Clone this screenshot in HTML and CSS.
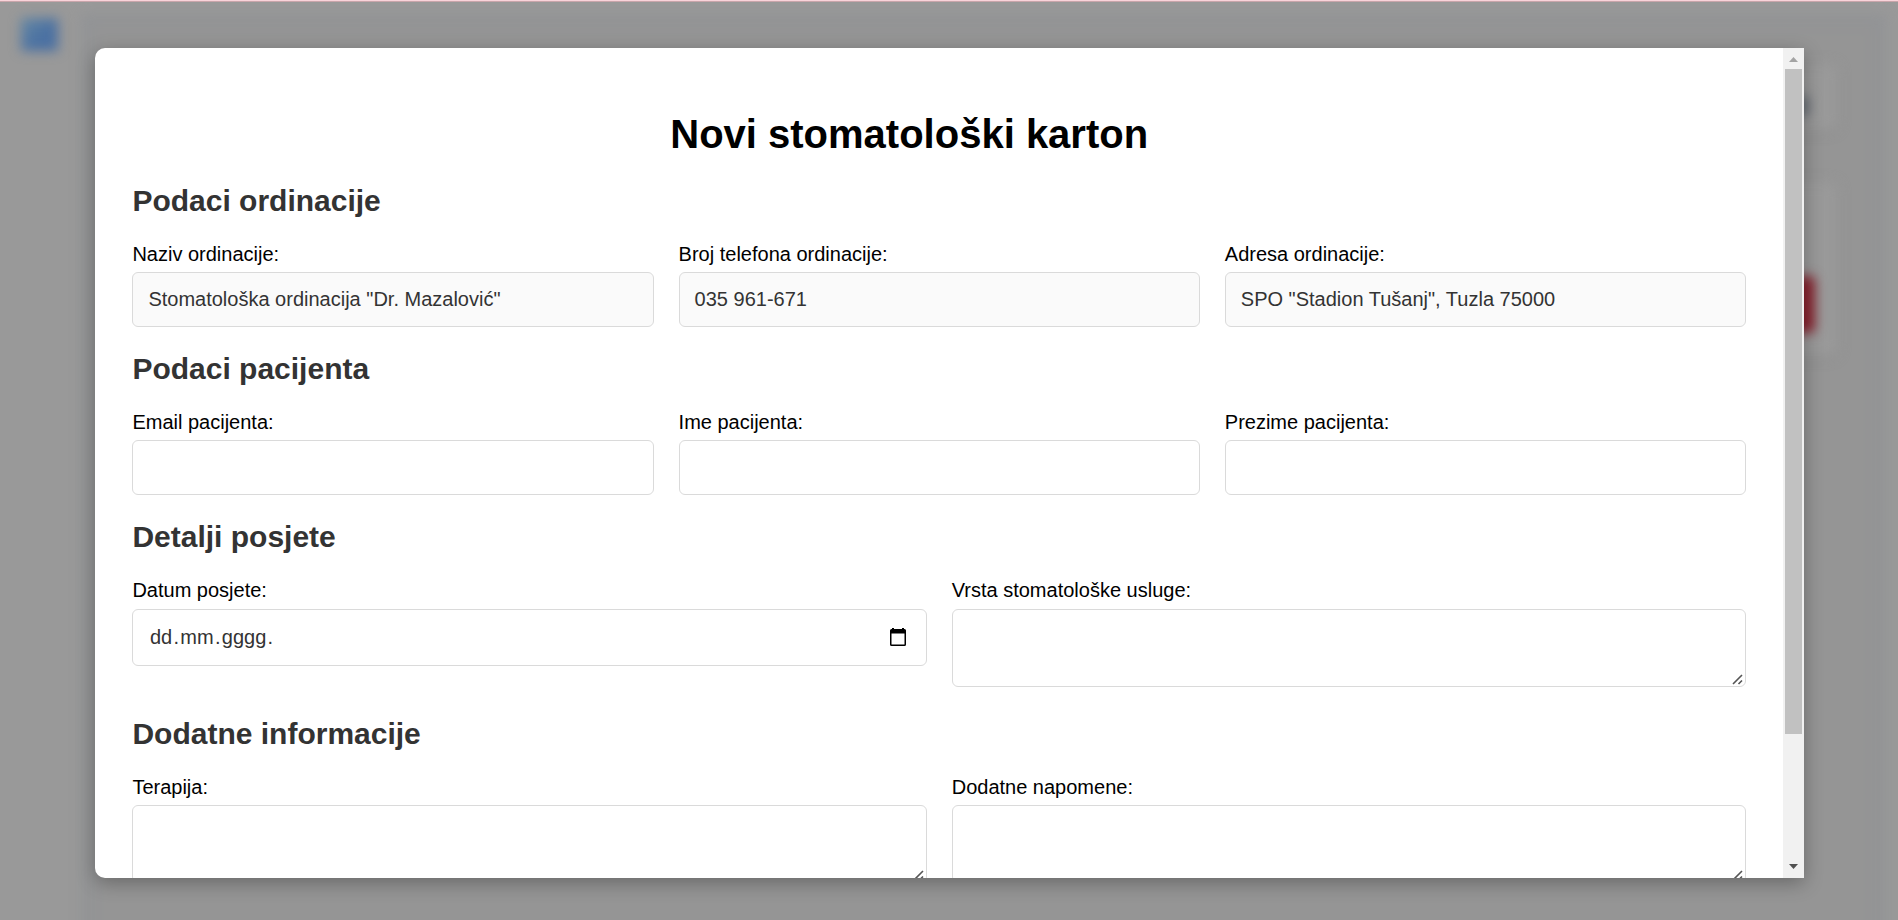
FILE: index.html
```html
<!DOCTYPE html>
<html lang="bs">
<head>
<meta charset="utf-8">
<title>Novi stomatološki karton</title>
<link rel="stylesheet" href="styles.css">
</head>
<body>
<div class="page">
  <div class="backdrop">
    <span class="menu-button"></span>
    <span class="frame"></span>
    <span class="card card-top"></span>
    <span class="card card-main"></span>
    <span class="glyph"></span>
    <span class="danger-button"></span>
  </div>
  <div class="topline"></div>
  <main class="modal">
    <form class="form">
      <h1 class="title">Novi stomatološki karton</h1>
      <h2 class="section-title">Podaci ordinacije</h2>
      <div class="row three">
        <div class="field"><label class="label">Naziv ordinacije:</label><div class="input readonly">Stomatološka ordinacija "Dr. Mazalović"</div></div>
        <div class="field"><label class="label">Broj telefona ordinacije:</label><div class="input readonly">035 961-671</div></div>
        <div class="field"><label class="label">Adresa ordinacije:</label><div class="input readonly">SPO "Stadion Tušanj", Tuzla 75000</div></div>
      </div>
      <h2 class="section-title">Podaci pacijenta</h2>
      <div class="row three">
        <div class="field"><label class="label">Email pacijenta:</label><div class="input"></div></div>
        <div class="field"><label class="label">Ime pacijenta:</label><div class="input"></div></div>
        <div class="field"><label class="label">Prezime pacijenta:</label><div class="input"></div></div>
      </div>
      <h2 class="section-title">Detalji posjete</h2>
      <div class="row two visit">
        <div class="field"><label class="label">Datum posjete:</label>
          <div class="input date"><span class="date-text">dd<i class="dot">.</i>mm<i class="dot">.</i>gggg<i class="dot">.</i></span>
            <svg class="calendar" viewBox="0 0 16 18"><path d="M0 2.5Q0 1 1.5 1H2V0H4V1H12V0H14V1H14.5Q16 1 16 2.5V16.5Q16 18 14.5 18H1.500Q0 18 0 16.500ZM1.500 5.500V16.500H14.500V5.500Z" fill-rule="evenodd"/></svg>
          </div>
        </div>
        <div class="field"><label class="label">Vrsta stomatološke usluge:</label><div class="input area"><svg class="grip" viewBox="0 0 11 11"><path d="M1 10L10 1M6.500 10L10 6.500"/></svg></div></div>
      </div>
      <h2 class="section-title">Dodatne informacije</h2>
      <div class="row two">
        <div class="field"><label class="label">Terapija:</label><div class="input area"><svg class="grip" viewBox="0 0 11 11"><path d="M1 10L10 1M6.500 10L10 6.500"/></svg></div></div>
        <div class="field"><label class="label">Dodatne napomene:</label><div class="input area"><svg class="grip" viewBox="0 0 11 11"><path d="M1 10L10 1M6.500 10L10 6.500"/></svg></div></div>
      </div>
    </form>
    <div class="scrollbar">
      <svg class="arrow" viewBox="0 0 21 21"><path d="M6 14L10.500 9L15 14Z" fill="#a3a3a3"/></svg>
      <div class="thumb"></div>
      <svg class="arrow bottom" viewBox="0 0 21 21"><path d="M6 7L10.500 12L15 7Z" fill="#505050"/></svg>
    </div>
  </main>
</div>
</body>
</html>
```
FILE: styles.css
```css
* { box-sizing: border-box; }
body { margin: 0; font-family: "Liberation Sans", Arial, sans-serif; color: #000; }
.page { position: relative; width: 1898px; height: 920px; overflow: hidden; padding: 48px 94px 0 95px; background: #999; }

/* Blurred application behind the dialog */
.backdrop { position: absolute; inset: 0; overflow: hidden; }
.backdrop span { position: absolute; }
.menu-button { left: 21px; top: 18px; width: 37px; height: 33px; background: linear-gradient(135deg, #6488a4, #4a70a2 60%); filter: blur(6px); }
.frame { left: 82px; top: 14px; right: 13px; bottom: -30px; background: #959595; box-shadow: inset 0 0 14px 8px #919396; filter: blur(6px); }
.card { border-radius: 8px; background: #999; box-shadow: 0 4px 12px rgba(0, 0, 0, .05); filter: blur(6px); }
.card-top { left: 200px; top: 64px; width: 1638px; height: 66px; }
.card-main { left: 200px; top: 182px; width: 1638px; height: 174px; }
.glyph { left: 1780px; top: 96px; width: 29px; height: 20px; background: #666c74; filter: blur(6px); }
.danger-button { left: 1760px; top: 276px; width: 55px; height: 57px; background: #87202c; border-radius: 5px; filter: blur(6px); }
.topline { position: absolute; left: 0; right: 0; top: 0; height: 2px; background: #f9d3da; border-bottom: 1px solid #c8a5aa; }

.modal { position: relative; display: flex; height: 830px; overflow: hidden; background: #fff; border-radius: 10px 0 0 10px; box-shadow: 0 5px 19px rgba(0, 0, 0, .3); }
.form { flex: 1; min-width: 0; padding: 62px 37px 0 37.4px; }
.title { margin: 0; padding-right: 60px; height: 49px; line-height: 49px; font-size: 40px; text-align: center; }
.section-title { margin: 0; padding-top: 25px; height: 75px; line-height: 34px; font-size: 30px; color: #333; }
.row { display: grid; gap: 25px; height: 93px; }
.three { grid-template-columns: repeat(3, 1fr); }
.two { grid-template-columns: repeat(2, 1fr); }
.visit { height: 122px; }
.visit .label { height: 39px; }
.label { display: block; height: 38px; padding-top: 8px; line-height: 24px; font-size: 20px; }
.input { position: relative; height: 55px; padding: 0 15px; line-height: 52px; font-size: 20px; color: #333; border: 1px solid #dadada; border-radius: 6px; background: #fff; white-space: pre; }
.readonly { background: #fafafa; }
.date { display: flex; align-items: center; justify-content: space-between; height: 57px; padding: 0 20px 2px 16.5px; }
.dot { font-style: normal; padding: 0 1.3px; }
.calendar { width: 16px; height: 18px; }
.area { height: 78px; }
.grip { position: absolute; right: 2px; bottom: 1px; width: 11px; height: 11px; fill: none; stroke: #555; stroke-width: 1.6; }
.scrollbar { display: flex; flex-direction: column; width: 21px; background: #f1f1f1; }
.arrow { width: 21px; height: 21px; }
.thumb { width: 17px; height: 665px; margin: 0 2px; background: #c1c1c1; }
.bottom { margin-top: auto; }
```
